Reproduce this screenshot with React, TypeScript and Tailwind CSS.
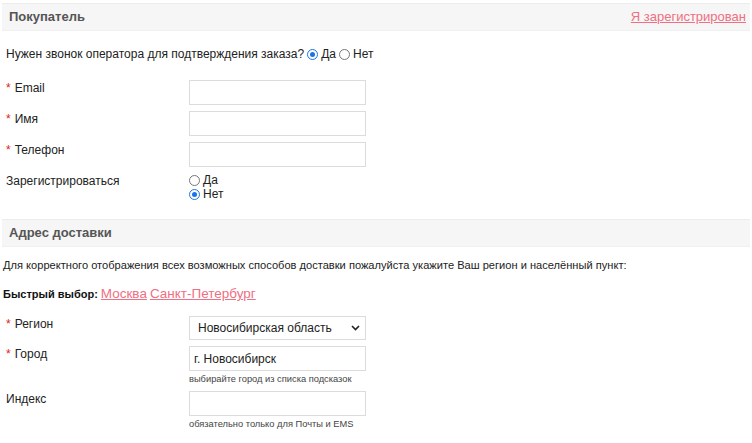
import React from "react";

const pink = "text-[#ef6f83]";

function SectionHeader({ title, link }: { title: string; link?: string }) {
  return (
    <div className="mx-[2px] h-[28px] flex items-center justify-between bg-[#f6f6f6] border-t border-[#ececec] border-b border-b-[#f0f0f0] pl-[7px] pr-[4px]">
      <span className="text-[13px] font-bold text-[#555]">{title}</span>
      {link && <a className={`text-[13px] underline ${pink}`}>{link}</a>}
    </div>
  );
}

function Radio({ checked }: { checked?: boolean }) {
  return checked ? (
    <span className="inline-block w-[11px] h-[11px] rounded-full border border-[#1a73e8] bg-white relative shrink-0">
      <span className="absolute inset-[2px] rounded-full bg-[#1a73e8]" />
    </span>
  ) : (
    <span className="inline-block w-[11px] h-[11px] rounded-full border border-[#767676] bg-white shrink-0" />
  );
}

function Label({ text, required }: { text: string; required?: boolean }) {
  return (
    <div className="w-[189px] shrink-0 pl-[6px] pt-[1px] text-[12px] leading-[14px] text-[#222]">
      {required && <span className="text-[#e02020] mr-[4px]">*</span>}
      {text}
    </div>
  );
}

function Field({ label, required, value, hint, select }: { label: string; required?: boolean; value?: string; hint?: string; select?: boolean }) {
  return (
    <div className="flex">
      <Label text={label} required={required} />
      <div className="flex flex-col">
        <div className={`w-[177px] ${select ? "h-[24px] pl-[8px]" : "h-[25px] pl-[4px]"} border border-[#dcdcdc] bg-white flex items-center justify-between pr-[5px] text-[12px] text-[#222] whitespace-nowrap`}>
          <span>{value}</span>
          {select && (
            <svg width="9" height="6" viewBox="0 0 9 6">
              <path d="M1 1l3.5 3.5L8 1" stroke="#222" strokeWidth="1.6" fill="none" />
            </svg>
          )}
        </div>
        {hint && <div className="text-[9.3px] text-[#444] leading-[12px] mt-[2px] whitespace-nowrap">{hint}</div>}
      </div>
    </div>
  );
}

export default function App() {
  return (
    <div className="w-[752px] h-[443px] bg-white overflow-hidden pt-[3px]" style={{ fontFamily: "'Liberation Sans', Arial, sans-serif" }}>
      <SectionHeader title="Покупатель" link="Я зарегистрирован" />

      <div className="pl-[6px] mt-[16px] h-[14px] text-[12px] leading-[14px] text-[#222] flex items-center gap-[3px]">
        <span>Нужен звонок оператора для подтверждения заказа?</span>
        <Radio checked />
        <span>Да</span>
        <Radio />
        <span>Нет</span>
      </div>

      <div className="mt-[19px] flex flex-col gap-[6px]">
        <Field label="Email" required />
        <Field label="Имя" required />
        <Field label="Телефон" required />
        <div className="flex">
          <Label text="Зарегистрироваться" />
          <div className="flex flex-col text-[12px] text-[#222] leading-[14px]">
            <div className="flex items-center gap-[3px]"><Radio /> <span>Да</span></div>
            <div className="flex items-center gap-[3px]"><Radio checked /> <span>Нет</span></div>
          </div>
        </div>
      </div>

      <div className="mt-[18px]">
        <SectionHeader title="Адрес доставки" />
      </div>

      <div className="pl-[3px] mt-[11px] text-[11.1px] leading-[14px] text-[#222]">
        Для корректного отображения всех возможных способов доставки пожалуйста укажите Ваш регион и населённый пункт:
      </div>

      <div className="pl-[3px] mt-[12px] h-[16px] flex items-baseline gap-[3px]">
        <span className="text-[11px] font-bold text-[#111]">Быстрый выбор:</span>
        <a className={`text-[13.5px] underline ${pink}`}>Москва</a>
        <a className={`text-[13.5px] underline ${pink}`}>Санкт-Петербург</a>
      </div>

      <div className="mt-[16px] flex flex-col gap-[6px]">
        <Field label="Регион" required value="Новосибирская область" select />
        <Field label="Город" required value="г. Новосибирск" hint="выбирайте город из списка подсказок" />
        <Field label="Индекс" hint="обязательно только для Почты и EMS" />
      </div>
    </div>
  );
}
